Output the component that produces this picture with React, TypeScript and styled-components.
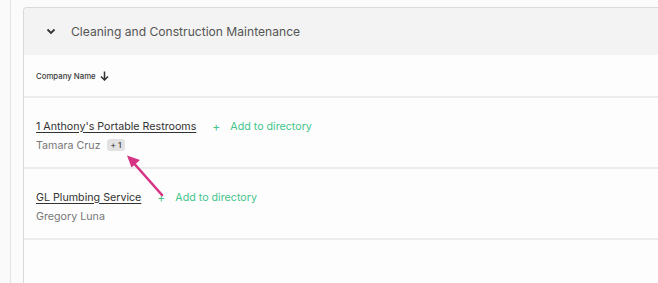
import styled, { createGlobalStyle } from 'styled-components';

const GlobalStyle = createGlobalStyle`
  html, body {
    margin: 0;
    padding: 0;
    background: #fafafa;
    font-family: Inter, "Noto Sans", sans-serif;
  }
`

type TCompany = {
  name: string;
  contact: string;
  extra?: number;
}

const companies: TCompany[] = [
  { name: "1 Anthony's Portable Restrooms", contact: 'Tamara Cruz', extra: 1 },
  { name: 'GL Plumbing Service', contact: 'Gregory Luna' },
]

const App = () => {
  return (
    <Page>
      <GlobalStyle />
      <Gutter />
      <Content>
        <Card>
          <SectionHeader>
            <svg width="10" height="7" viewBox="0 0 10 7">
              <path d="M1.5 1.5 L5 5 L8.5 1.5" fill="none" stroke="#333" strokeWidth="1.8" />
            </svg>
            <SectionTitle>Cleaning and Construction Maintenance</SectionTitle>
          </SectionHeader>
          <ColumnHeader>
            Company Name
            <svg width="9" height="10" viewBox="0 0 9 10">
              <path d="M4.5 0.5 V9 M1 5.5 L4.5 9 L8 5.5" fill="none" stroke="#333" strokeWidth="1.5" />
            </svg>
          </ColumnHeader>
          {companies.map((company, i) => (
            <Row key={`company-${i}`}>
              <TopLine>
                <CompanyLink>{company.name}</CompanyLink>
                <AddButton>
                  <Plus>+</Plus>
                  Add to directory
                </AddButton>
              </TopLine>
              <Contact>
                {company.contact}
                {company.extra && <Badge>+ {company.extra}</Badge>}
              </Contact>
            </Row>
          ))}
          <Pointer width="40" height="44" viewBox="0 0 40 44">
            <path d="M37 41 L6 6" stroke="#d63384" strokeWidth="2.6" strokeLinecap="round" fill="none" />
            <path d="M2 1.5 L15 6 L6.5 13.5 Z" fill="#d63384" />
          </Pointer>
        </Card>
      </Content>
    </Page>
  );
}

export default App;

const Page = styled.div`
  display: flex;
  height: 283px;
  overflow: hidden;
`
const Gutter = styled.div`
  width: 10px;
  flex-shrink: 0;
  border-right: 1px solid #e3e3e3;
`
const Content = styled.div`
  flex: 1;
  padding: 7px 0 0 12px;
  background: #fbfbfb;
`
const Card = styled.div`
  position: relative;
  height: 100%;
  box-sizing: border-box;
  border: 1px solid #dadada;
  border-right: none;
  border-bottom: none;
  border-radius: 4px 0 0 0;
  background: #fdfdfd;
`
const SectionHeader = styled.div`
  display: flex;
  align-items: center;
  gap: 15px;
  height: 47px;
  padding-left: 22px;
  background: #f3f3f3;
  border-radius: 4px 0 0 0;
`
const SectionTitle = styled.span`
  font-size: 12.1px;
  color: #555;
`
const ColumnHeader = styled.div`
  display: flex;
  align-items: center;
  gap: 4px;
  height: 41px;
  padding-left: 12px;
  font-size: 7.8px;
  font-weight: 500;
  color: #3a3a3a;
  border-bottom: 2px solid #ececec;
`
const Row = styled.div`
  display: flex;
  flex-direction: column;
  justify-content: center;
  gap: 5px;
  height: 71px;
  box-sizing: border-box;
  padding: 5px 0 0 12px;
  border-bottom: 2px solid #ececec;
`
const TopLine = styled.div`
  display: flex;
  align-items: center;
  gap: 16px;
`
const CompanyLink = styled.span`
  font-size: 10.7px;
  color: #333;
  text-decoration: underline;
  text-underline-offset: 2px;
`
const AddButton = styled.span`
  display: flex;
  align-items: center;
  gap: 10px;
  font-size: 10.7px;
  color: #45c58c;
`
const Plus = styled.span`
  font-size: 12px;
`
const Contact = styled.div`
  display: flex;
  align-items: center;
  gap: 6px;
  font-size: 10.7px;
  color: #777;
`
const Badge = styled.span`
  padding: 1px 4px;
  border-radius: 3px;
  background: #e2e2e2;
  font-size: 8px;
  font-weight: 600;
  color: #555;
`
const Pointer = styled.svg`
  position: absolute;
  left: 101px;
  top: 146px;
`
